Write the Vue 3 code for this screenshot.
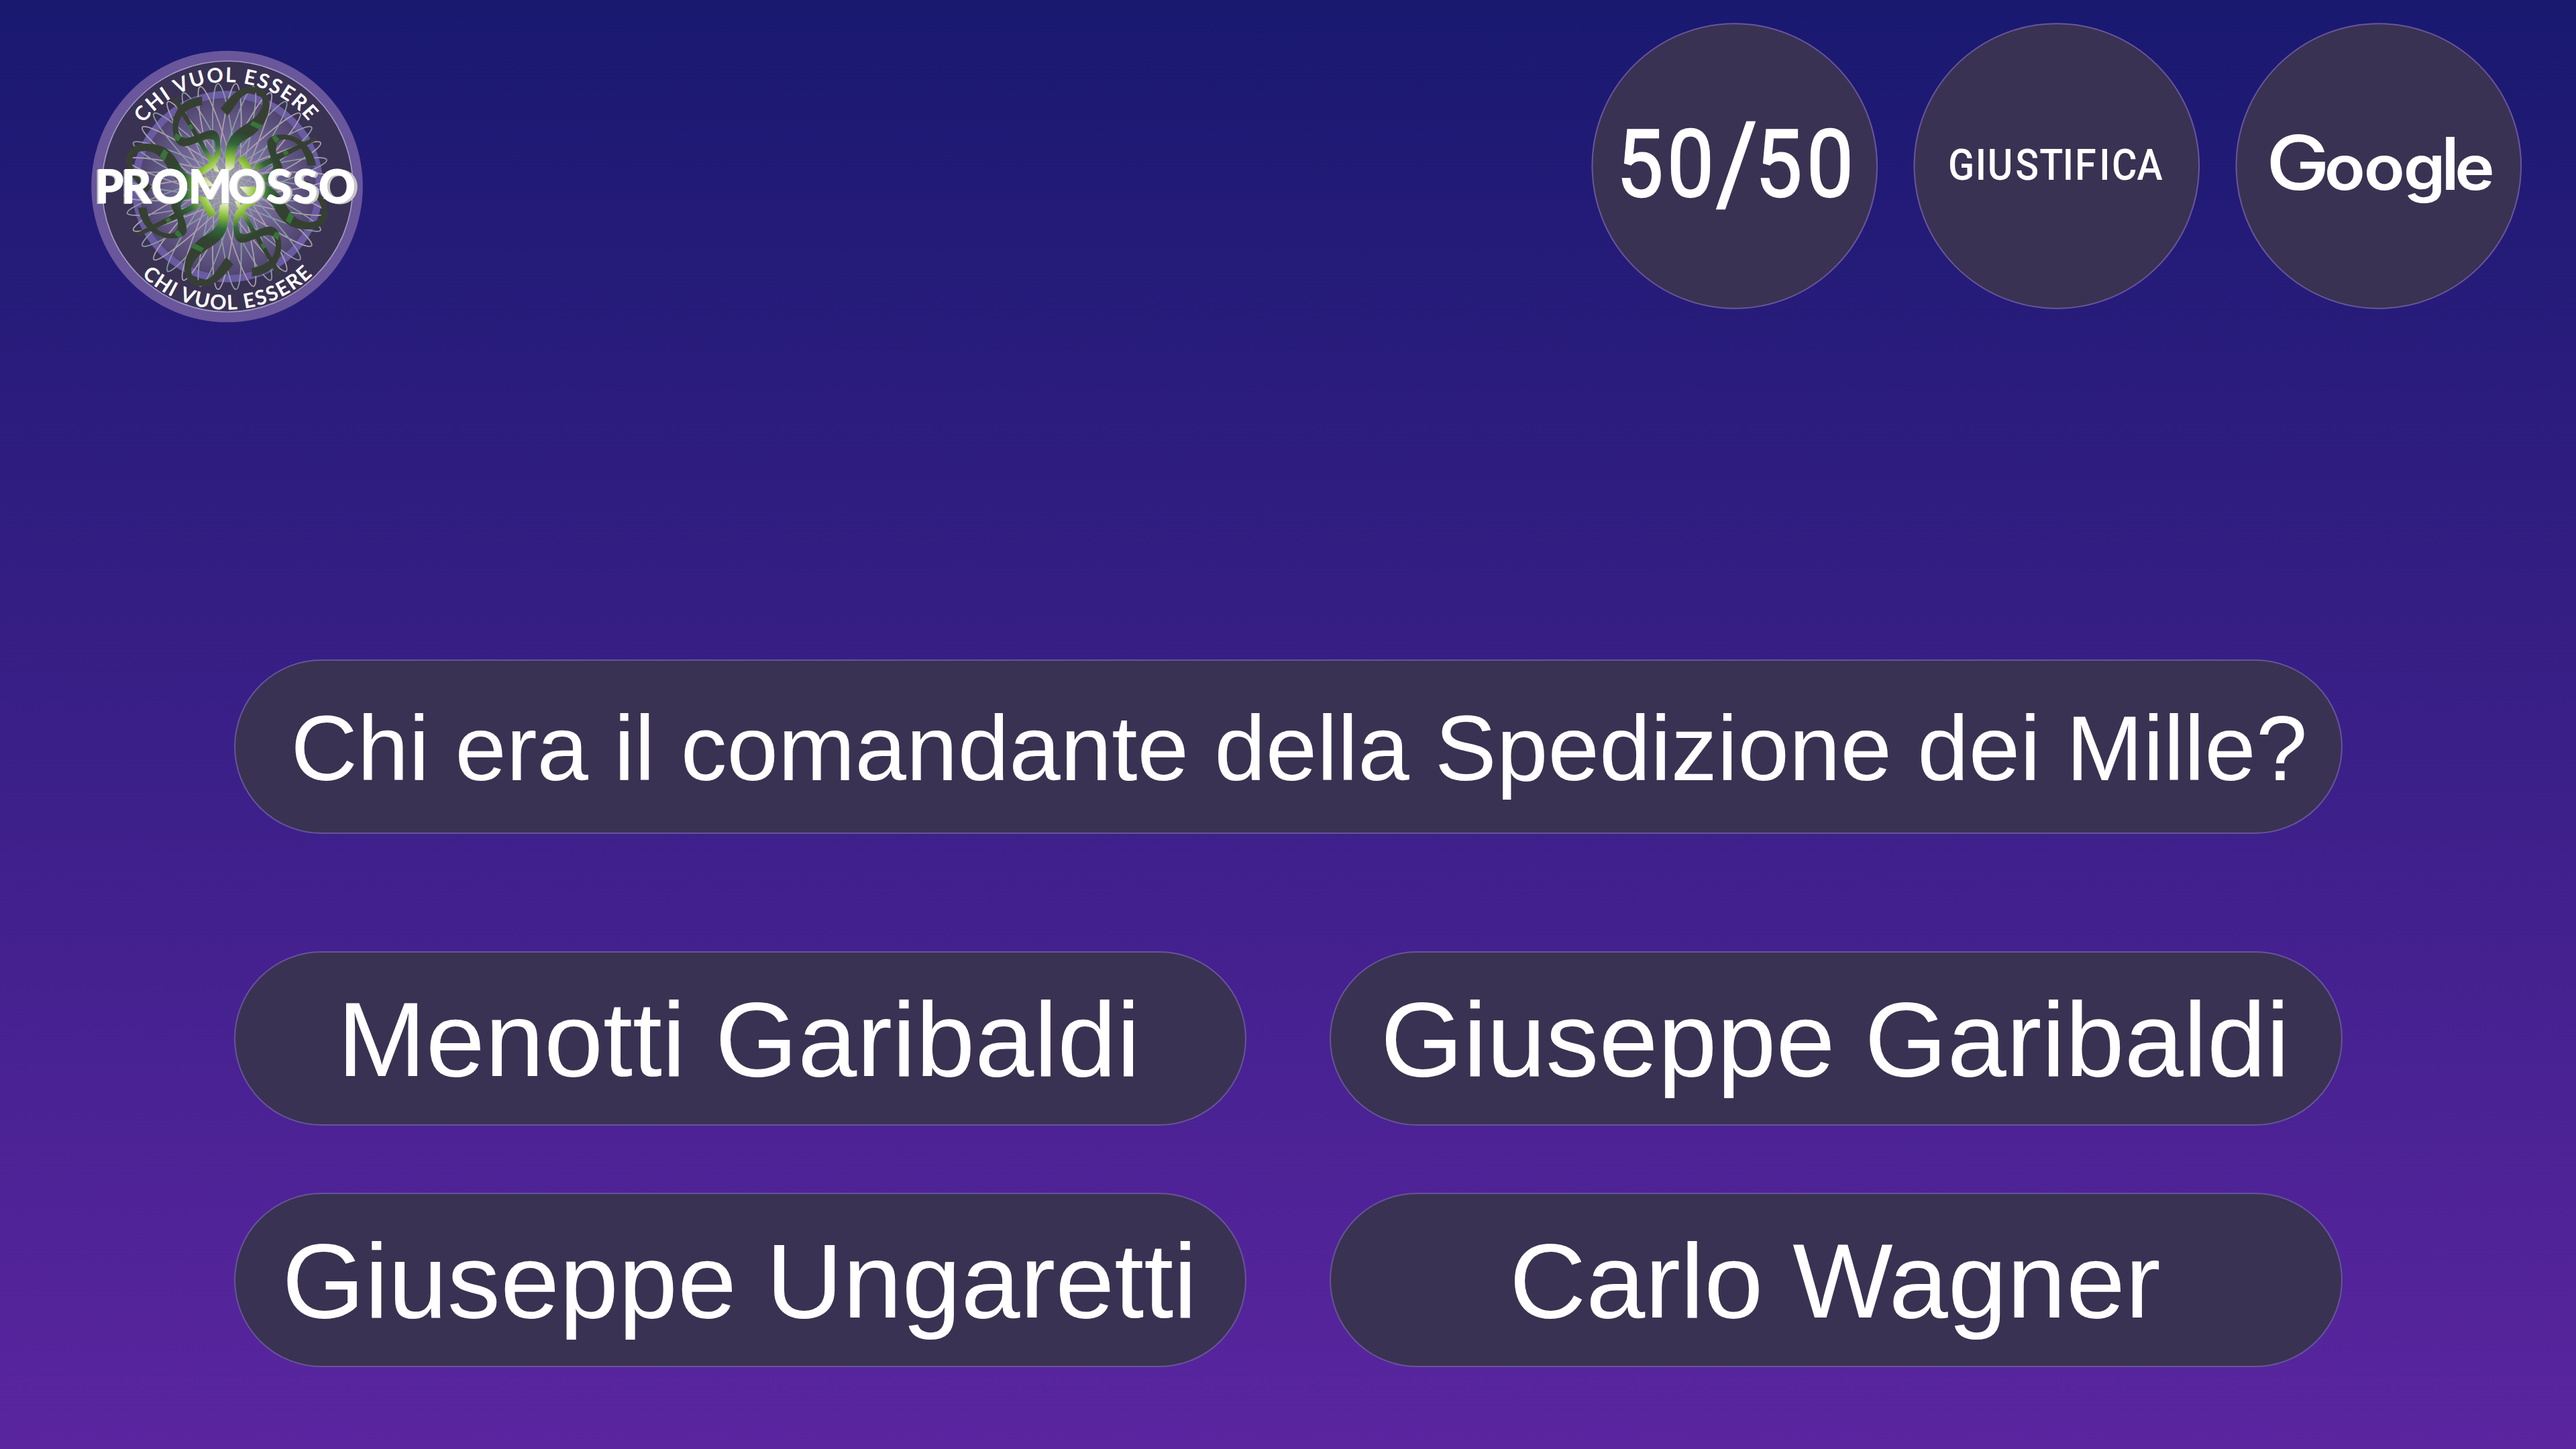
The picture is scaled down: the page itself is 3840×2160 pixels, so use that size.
<script setup>
const petals = Array.from({ length: 18 }, (_, i) => ({
  angle: -5 + i * 10,
  color: i % 2 ? '#ab9fa9' : '#8a9ba0',
}))

const answers = [
  { text: 'Menotti Garibaldi', slot: 'a' },
  { text: 'Giuseppe Garibaldi', slot: 'b' },
  { text: 'Giuseppe Ungaretti', slot: 'c' },
  { text: 'Carlo Wagner', slot: 'd' },
]
</script>

<template>
  <main class="stage">
    <header class="top">
      <svg class="logo" viewBox="0 0 1320 1320">
        <defs>
          <radialGradient id="orb" gradientUnits="userSpaceOnUse" cx="655" cy="654" r="400">
            <stop offset="0" stop-color="#a99fd0" />
            <stop offset="0.5" stop-color="#75699b" />
            <stop offset="1" stop-color="#50446f" />
          </radialGradient>
          <radialGradient id="vine" gradientUnits="userSpaceOnUse" cx="655" cy="654" r="300">
            <stop offset="0.15" stop-color="#ffffff" />
            <stop offset="0.28" stop-color="#d9eaac" />
            <stop offset="0.43" stop-color="#90c43c" />
            <stop offset="0.64" stop-color="#30693a" />
            <stop offset="0.82" stop-color="#314530" />
            <stop offset="1" stop-color="#364032" />
          </radialGradient>
          <g id="half">
            <path d="M648 600V520C650 440 685 410 740 375C790 345 825 300 812 262C800 225 745 225 715 260C695 285 680 310 658 338L626 305C665 260 700 208 765 208C835 208 850 270 843 310C838 350 810 395 770 425C730 450 700 460 692 510L688 568Z" />
            <path d="M298 682C250 640 205 590 206 540C208 480 250 462 300 462C380 465 410 500 440 550C460 590 480 605 520 620V680C450 660 400 600 385 560C365 530 340 497 290 495C245 495 230 520 230 550C235 590 280 630 320 652Z" />
            <path d="M544 252V290C480 300 440 330 437 390C437 420 450 440 475 437C520 430 560 400 590 402C620 408 627 440 626 490C625 550 590 580 540 605L522 577C570 558 603 530 604 490C605 450 600 440 570 442C530 450 490 478 455 474C425 468 412 430 412 385C415 310 460 260 544 252Z" />
            <path d="M411 264L432 256L470 325L598 540L622 590L600 585L540 480L445 322Z" />
            <path d="M1054 560H1015C1005 500 975 445 910 443C880 445 872 470 875 500C885 540 925 570 890 600C870 622 840 640 790 640V605C840 605 860 590 862 565C850 510 830 480 836 450C850 422 890 418 930 424C1000 440 1040 490 1054 560Z" />
            <path d="M1050 431L1058 446L930 512L790 584L775 562L900 500Z" />
            <path d="M700 528L735 516L790 612L745 606Z" />
            <path d="M710 655H797L780 696H750Z" />
            <g fill="#37743a">
              <path d="M770 361L816 382L798 399L757 377Z" />
              <path d="M373 486L392 502L374 543L355 519Z" />
              <path d="M426 415L452 430L436 452L418 441Z" />
              <path d="M480 382L494 374L506 394L492 401Z" />
              <path d="M855 435L872 425L890 443L875 461Z" />
              <path d="M904 500L923 492L932 507L912 516Z" />
            </g>
          </g>
          <path id="arcTop" d="M188 654A467 467 0 0 1 1122 654" />
          <path id="arcBottom" d="M104 654A551 551 0 0 0 1206 654" />
        </defs>
        <circle cx="655.5" cy="654" r="607" fill="#69569b" />
        <circle cx="657" cy="654" r="561" fill="#3a3252" stroke="#a598c6" stroke-width="5" />
        <circle cx="657" cy="654" r="412" fill="url(#orb)" stroke="#6a5aa4" stroke-width="32" />
        <g fill="none" stroke-width="5.5">
          <ellipse
            v-for="p in petals"
            :key="p.angle"
            cx="655"
            cy="654"
            rx="50"
            ry="462"
            :stroke="p.color"
            :transform="`rotate(${p.angle} 655 654)`"
          />
        </g>
        <g fill="url(#vine)">
          <use href="#half" />
          <use href="#half" transform="rotate(180 655 654)" />
        </g>
        <g class="arc-text">
          <text><textPath href="#arcTop" startOffset="302" textLength="850">CHI VUOL ESSERE</textPath></text>
          <text><textPath href="#arcBottom" startOffset="444" textLength="846">CHI VUOL ESSERE</textPath></text>
        </g>
        <g transform="translate(-8.5 2) scale(1.0184 1)">
          <text class="brand brand-shadow" x="67 185 318 483 661 832 949 1065" y="727">PROMOSSO</text>
        </g>
        <text class="brand" x="67 185 318 483 661 832 949 1065" y="727">PROMOSSO</text>
      </svg>

      <nav class="lifelines">
        <svg class="lifeline" viewBox="0 0 480 430">
          <circle cx="239.8" cy="215.5" r="212.3" />
          <g transform="translate(.5 260.6) scale(.9 1)">
            <text class="fifty" x="70 154 235 300 385" y="0 0 8.5 0 0">50<tspan font-size="167">/</tspan>50</text>
          </g>
        </svg>
        <svg class="lifeline" viewBox="0 0 480 430">
          <circle cx="239.8" cy="215.5" r="212.3" />
          <g transform="translate(.7 236) scale(.9 1)">
            <text class="justify" x="85.8 131.2 151.1 197.4 237.3 275.7 296 336.1 357.1 398.6">GIUSTIFICA</text>
          </g>
        </svg>
        <svg class="lifeline" viewBox="0 0 480 430">
          <circle cx="239.8" cy="215.5" r="212.3" />
          <g class="google">
            <text class="big" transform="scale(1.13 1)" x="63.4" y="251">G</text>
            <text transform="scale(1.08 1)" x="147 201.6 256.2 307.2 327.2" y="250.7">oog<tspan class="tall">l</tspan>e</text>
          </g>
        </svg>
      </nav>
    </header>

    <section class="quiz">
      <h1 class="pill question">Chi era il comandante della Spedizione dei Mille?</h1>
      <div class="answers">
        <button v-for="a in answers" :key="a.slot" class="pill answer" :class="a.slot">{{ a.text }}</button>
      </div>
    </section>
  </main>
</template>

<style>
html,
body {
  margin: 0;
  background: #191970;
}
</style>

<style scoped>
.stage {
  display: flex;
  flex-direction: column;
  width: 3840px;
  height: 2160px;
  overflow: hidden;
  background: linear-gradient(#191970, #5a259f);
  font-family: "Liberation Sans", Arial, sans-serif;
  color: #fff;
}
.top {
  display: flex;
  justify-content: space-between;
  align-items: flex-start;
  height: 983px;
  padding: 0 54px 0 120px;
  box-sizing: border-box;
}
.logo {
  width: 440px;
  height: 440px;
  margin-top: 60px;
}
.arc-text {
  font: 700 91px Lato, sans-serif;
  fill: #fff;
}
.brand {
  font: 700 203px Lato, sans-serif;
  fill: #fff;
  stroke: #fff;
  stroke-width: 6;
}
.brand-shadow {
  fill: #c5c5c5;
  stroke: #c5c5c5;
}
.lifelines {
  display: flex;
  margin-top: 32px;
}
.lifeline {
  width: 480px;
  height: 430px;
  fill: #fff;
}
.lifeline circle {
  fill: #3a3252;
  stroke: #69569b;
  stroke-width: 2;
}
.fifty {
  font: 400 138.5px Roboto, sans-serif;
  stroke: #fff;
  stroke-width: 2.4;
}
.justify {
  font: 500 64px Roboto, sans-serif;
}
.google {
  font: 600 93px Inter, sans-serif;
}
.google .big {
  font-size: 113px;
  font-weight: 500;
}
.google .tall {
  font-size: 109px;
  font-weight: 500;
}
.quiz {
  width: 3143px;
  margin-left: 349px;
}
.pill {
  display: block;
  box-sizing: border-box;
  height: 260px;
  margin: 0;
  padding: 0;
  border: 2px solid #66549a;
  border-radius: 130px;
  background: #3a3252;
  color: #fff;
  font-family: inherit;
  font-weight: 400;
  text-align: left;
  white-space: nowrap;
}
.question {
  padding-left: 82.5px;
  font-size: 137.6px;
  line-height: 260px;
}
.answers {
  display: grid;
  grid-template-columns: 1509px 1510px;
  justify-content: space-between;
  row-gap: 100px;
  margin-top: 175px;
}
.answer {
  font-size: 158.3px;
  line-height: 260px;
}
.a { padding-left: 152px; }
.b { padding-left: 74px; }
.c { padding-left: 69.5px; }
.d { padding-left: 266px; }
</style>
